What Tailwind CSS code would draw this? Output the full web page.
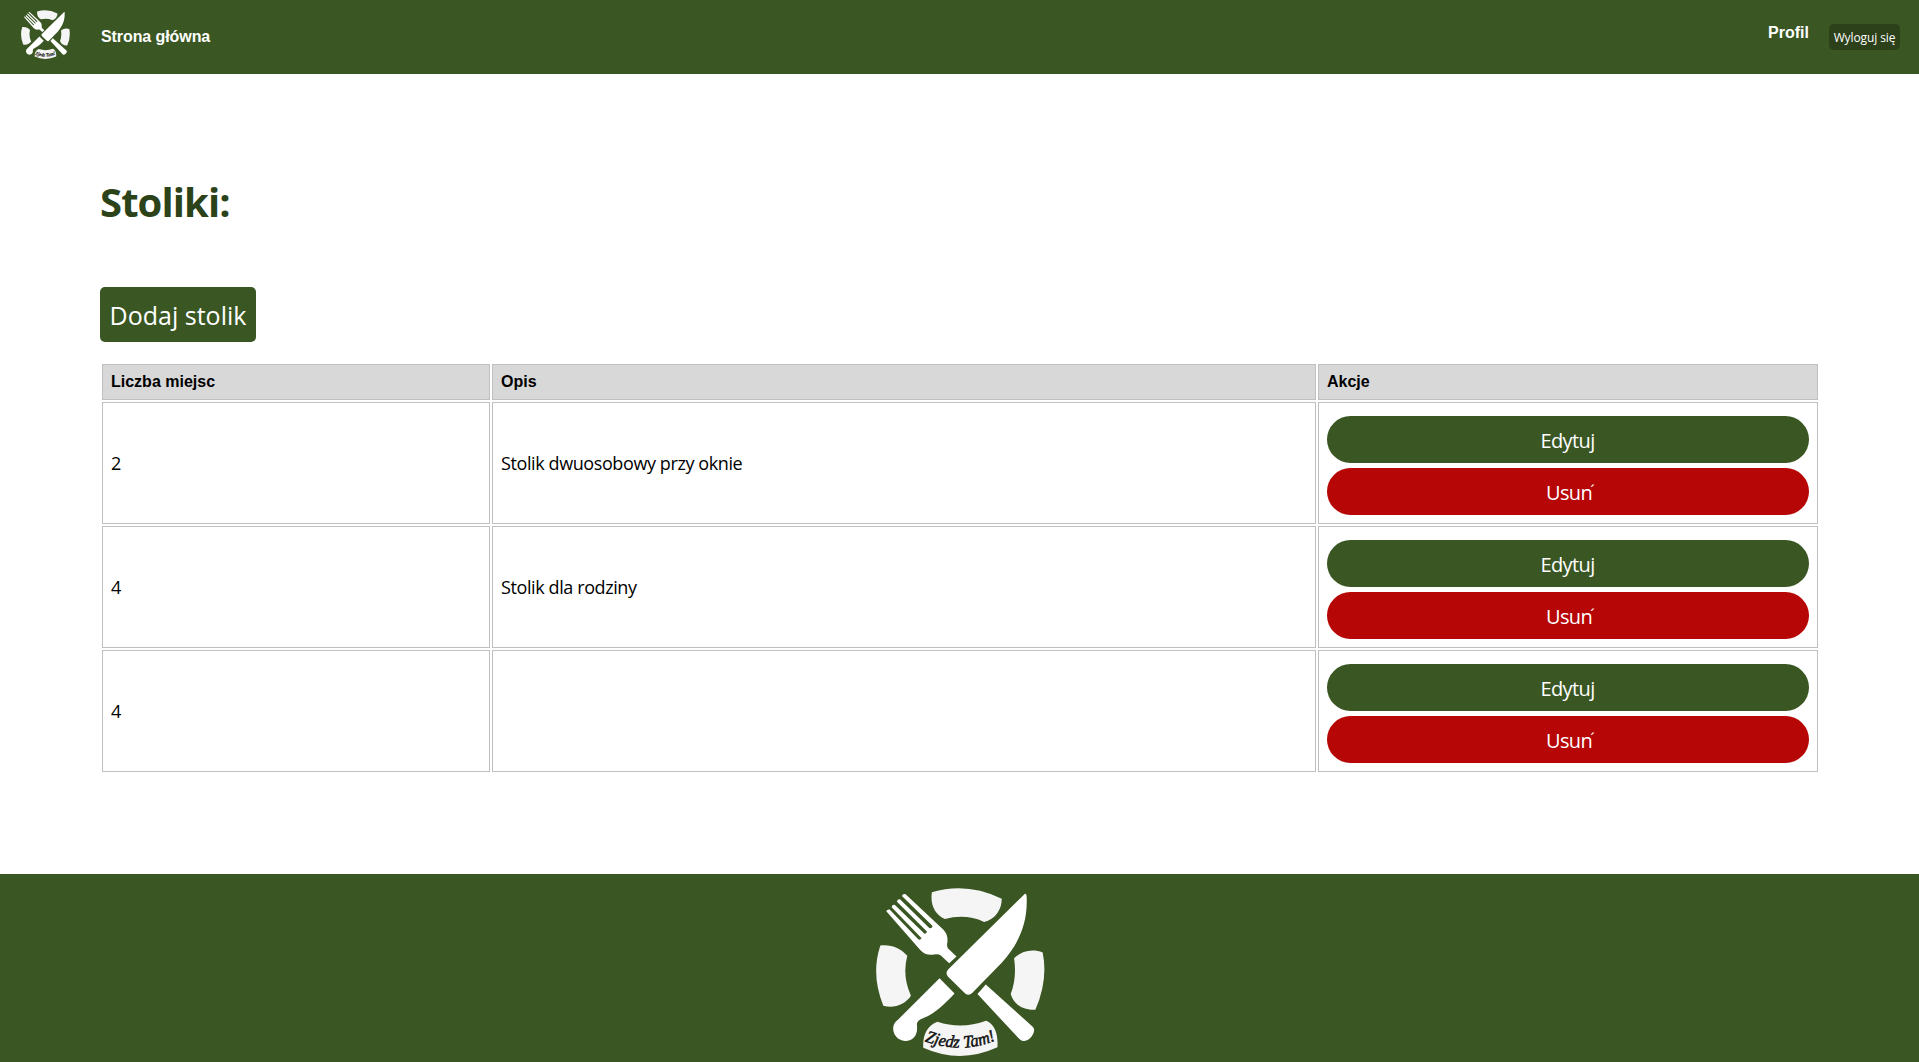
<!DOCTYPE html>
<html lang="pl">
<head>
<meta charset="utf-8">
<title>Stoliki</title>
<script src="https://cdn.jsdelivr.net/npm/@tailwindcss/browser@4"></script>
</head>
<body class="flex h-screen flex-col overflow-hidden bg-white font-['Open_Sans',sans-serif] text-black">

<svg class="hidden" aria-hidden="true">
  <symbol id="logo" viewBox="48 62 508 508">
    <g fill="#f5f5f5">
      <path d="M216 78Q320 46 426 97C426 130 406 159 373 167Q318 142 255 158C226 146 210 116 216 78Z"/>
      <path d="M61 238C92 234 122 245 142 269Q126 330 153 389C136 415 103 428 70 419Q32 325 61 238Z"/>
      <path d="M463 276C484 256 516 246 549 259Q566 342 527 431C491 433 462 416 453 384Q472 334 463 276Z"/>
      <path d="M233 467Q305 491 379 464C405 474 416 505 413 544Q302 595 190 545C188 507 202 478 233 467Z"/>
    </g>
    <g fill="#fff">
      <path d="M79 135Q81 129 89 130L175 219Q181 223 185 216L95 123Q96 114 105 116L193 202Q200 204 201 196L111 106Q112 98 120 99L209 186Q217 187 218 179L126 89Q129 81 137 84L250 190Q264 204 263 225Q260 240 264 246L290 271L268 291L243 268Q236 263 222 265Q197 269 181 251Z"/>
      <path d="M495 83Q501 80 501 94C504 174 475 235 426 290L337 381Q327 391 316 382L264 331Q256 322 264 311Z"/>
      <path d="M239 336L284 382C254 414 228 440 191 456Q169 464 171 477C175 508 159 526 135 525C111 523 97 503 100 482Q102 470 114 461Z"/>
      <path d="M378 355L519 482Q526 489 522 499C516 516 503 525 489 525Q482 524 477 517L353 384Z"/>
    </g>
    <path id="ribbon" d="M194 525Q308 568 416 519" fill="none"/>
    <text fill="#111" stroke="#111" stroke-width="1.5" font-family="Liberation Serif, serif" font-style="italic" font-size="52"><textPath href="#ribbon" textLength="220" lengthAdjust="spacingAndGlyphs">Zjedz Tam!</textPath></text>
  </symbol>
</svg>

<header class="flex h-[74px] shrink-0 items-start justify-between bg-[#3a5622] pr-[19px] pl-[21px] font-['Liberation_Sans',sans-serif] text-base font-bold text-white">
  <nav class="flex items-start">
    <svg class="mt-2.5 size-[49px]"><use href="#logo"/></svg>
    <a class="mt-[25px] ml-[31px] leading-6 tracking-[-0.08px]">Strona główna</a>
  </nav>
  <div class="flex items-start">
    <a class="mt-[21px] leading-6">Profil</a>
    <button class="mt-6 ml-5 h-[26px] w-[71px] rounded-[5px] bg-[#2c4019] pt-px font-['Open_Sans',sans-serif] text-xs font-normal tracking-[-0.1px] whitespace-nowrap">Wyloguj się</button>
  </div>
</header>

<main class="flex grow flex-col items-start px-[100px] pt-[104px]">
  <h1 class="text-[40px] leading-[48px] font-bold tracking-[-0.9px] text-[#2c4219]">Stoliki:</h1>
  <button class="mt-[61px] h-[55px] w-[156px] rounded-[5px] bg-[#3a5622] pt-0.5 text-[25px] whitespace-nowrap text-white">Dodaj stolik</button>

  <table class="mt-5 w-[1720px] table-fixed border-separate border-spacing-[2px] text-left text-lg tracking-[-0.4px]">
    <colgroup><col class="w-[388px]"><col class="w-[824px]"><col class="w-[500px]"></colgroup>
    <thead class="font-['Liberation_Sans',sans-serif] text-base tracking-normal">
      <tr class="h-9">
        <th class="border border-[#c0c0c0] bg-[#d8d8d8] px-2 leading-6">Liczba miejsc</th>
        <th class="border border-[#c0c0c0] bg-[#d8d8d8] px-2 leading-6">Opis</th>
        <th class="border border-[#c0c0c0] bg-[#d8d8d8] px-2 leading-6">Akcje</th>
      </tr>
    </thead>
    <tbody>
      <tr class="h-[122px]">
        <td class="border border-[#c0c0c0] px-2">2</td>
        <td class="border border-[#c0c0c0] px-2">Stolik dwuosobowy przy oknie</td>
        <td class="border border-[#c0c0c0] px-2 pt-[5px]">
          <div class="flex flex-col gap-[5px] text-xl tracking-[-0.6px] text-white">
            <button class="h-[47px] rounded-full bg-[#3a5622] pt-0.5 pr-px">Edytuj</button>
            <button class="h-[47px] rounded-full bg-[#b60605] pt-0.5">Usun<span class="-mr-1 -ml-0.5 align-[3px] text-base leading-none">´</span></button>
          </div>
        </td>
      </tr>
      <tr class="h-[122px]">
        <td class="border border-[#c0c0c0] px-2">4</td>
        <td class="border border-[#c0c0c0] px-2">Stolik dla rodziny</td>
        <td class="border border-[#c0c0c0] px-2 pt-[5px]">
          <div class="flex flex-col gap-[5px] text-xl tracking-[-0.6px] text-white">
            <button class="h-[47px] rounded-full bg-[#3a5622] pt-0.5 pr-px">Edytuj</button>
            <button class="h-[47px] rounded-full bg-[#b60605] pt-0.5">Usun<span class="-mr-1 -ml-0.5 align-[3px] text-base leading-none">´</span></button>
          </div>
        </td>
      </tr>
      <tr class="h-[122px]">
        <td class="border border-[#c0c0c0] px-2">4</td>
        <td class="border border-[#c0c0c0] px-2"></td>
        <td class="border border-[#c0c0c0] px-2 pt-[5px]">
          <div class="flex flex-col gap-[5px] text-xl tracking-[-0.6px] text-white">
            <button class="h-[47px] rounded-full bg-[#3a5622] pt-0.5 pr-px">Edytuj</button>
            <button class="h-[47px] rounded-full bg-[#b60605] pt-0.5">Usun<span class="-mr-1 -ml-0.5 align-[3px] text-base leading-none">´</span></button>
          </div>
        </td>
      </tr>
    </tbody>
  </table>
</main>

<footer class="flex h-[188px] shrink-0 justify-center bg-[#3a5622] pt-[13px]">
  <svg class="ml-[2px] size-[169px]"><use href="#logo"/></svg>
</footer>
</body>
</html>
